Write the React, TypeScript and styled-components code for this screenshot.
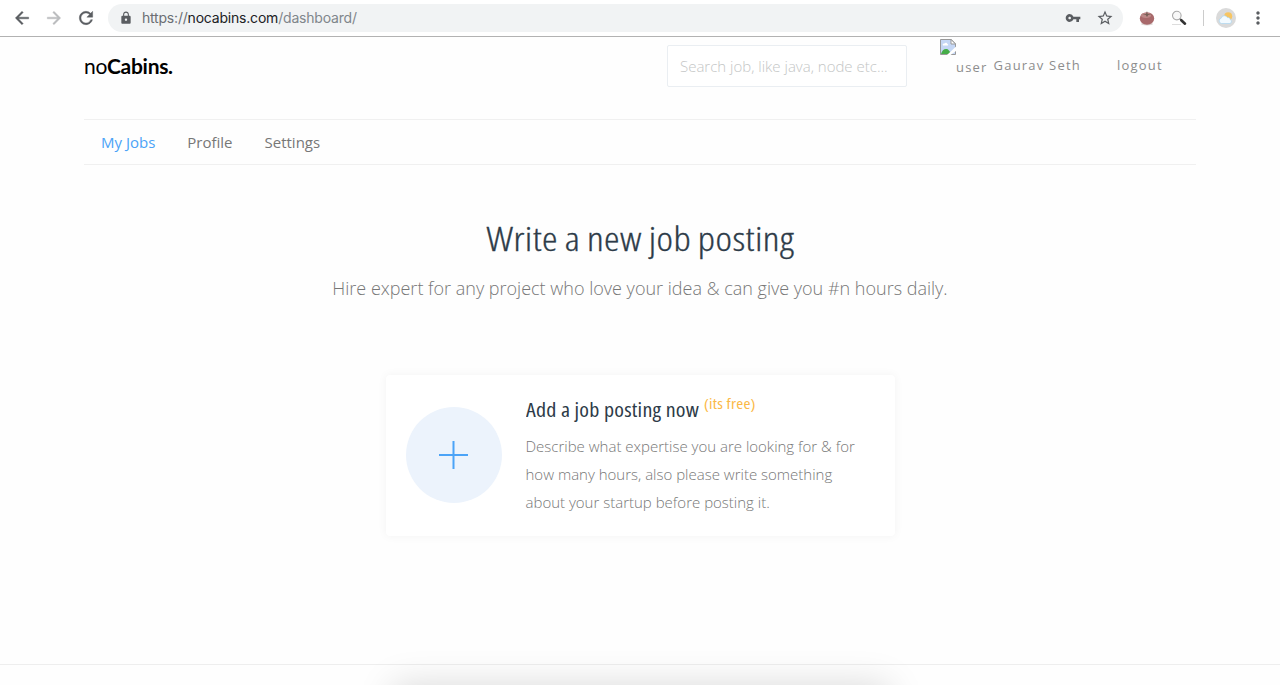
import React, { useState } from "react";
import styled, { createGlobalStyle } from "styled-components";
import {
  MdArrowBack,
  MdArrowForward,
  MdLock,
  MdMoreVert,
  MdRefresh,
  MdStarBorder,
  MdVpnKey,
} from "react-icons/md";

const tabs = ["My Jobs", "Profile", "Settings"];

const BrokenImage = () => (
  <svg width="16" height="16" viewBox="0 0 16 16">
    <path d="M.5.5h10.8l4.2 4.2v10.8H.5z" fill="#c5d7f5" stroke="#999" />
    <path d="M3 6.5c-.8-1.4.5-2.5 1.5-2 .8-1.5 3-.8 2.8.5 1.2 0 1.2 1.5.3 1.5z" fill="#fff" />
    <path d="M1 15c1-4 4-6 7-4.500L12 15z" fill="#46ad48" />
    <path d="M16 7.500L7 16h3.500L16 12z" fill="#fff" />
    <path d="M11 .5v4.500h4.500z" fill="#fff" stroke="#999" />
  </svg>
);

const Tomato = () => (
  <svg width="16" height="16" viewBox="0 0 16 16">
    <ellipse cx="8" cy="14" rx="6" ry="1.500" fill="#ddd6d4" />
    <ellipse cx="8" cy="8.500" rx="7.200" ry="6.200" fill="#a9696b" />
    <ellipse cx="7" cy="5.500" rx="5" ry="2.400" fill="#bd8887" />
    <path d="M3.500 4.500L7 4l1-3 .7 3 4 .6-3.500.4L8 7 6.700 5z" fill="#765f56" />
  </svg>
);

const Magnifier = () => (
  <svg width="16" height="16" viewBox="0 0 16 16">
    <path d="M1 14.500h9" stroke="#ddd" />
    <circle cx="5.800" cy="5.600" r="4.300" fill="#f8f8f8" stroke="#aaa" strokeWidth="1.100" />
    <path d="M8.800 8.800l1.700 1.700" stroke="#777" strokeWidth="1.300" />
    <path d="M10.300 10.200l3.700 3.500" stroke="#333" strokeWidth="2.600" strokeLinecap="round" />
  </svg>
);

const Weather = () => (
  <svg width="20" height="20" viewBox="0 0 20 20">
    <circle cx="10" cy="10" r="10" fill="#dadada" />
    <circle cx="12.200" cy="8.300" r="4" fill="#f7c562" />
    <path
      d="M5.500 15.500a2.700 2.700 0 0 1-.3-5.300 3.300 3.300 0 0 1 6.200-.6 2.400 2.400 0 0 1 3 2.200 2 2 0 0 1-.4 3.700z"
      fill="#f2faff"
      stroke="#a9d5f1"
      strokeWidth=".7"
    />
  </svg>
);

const App = () => {
  const [active, setActive] = useState("My Jobs");
  const [search, setSearch] = useState("");

  const changeSearch = (e: React.ChangeEvent<HTMLInputElement>) => {
    setSearch(e.target.value);
  };

  return (
    <>
      <GlobalStyle />
      <Page>
        <BrowserBar>
          <BrowserButtons>
            <MdArrowBack size={20} />
            <MdArrowForward size={20} color="#babcbe" />
            <MdRefresh size={20} />
          </BrowserButtons>
          <AddressBar>
            <MdLock size={14} />
            <Url>
              https://<b>nocabins.com</b>
              <UrlPath>/dashboard/</UrlPath>
            </Url>
            <MdVpnKey size={16} />
            <MdStarBorder size={18} />
          </AddressBar>
          <Extensions>
            <Tomato />
            <Magnifier />
          </Extensions>
          <BarDivider />
          <Weather />
          <MenuButton>
            <MdMoreVert size={20} />
          </MenuButton>
        </BrowserBar>
        <Container>
          <Header>
            <Logo>
              no<b>Cabins.</b>
            </Logo>
            <SearchInput
              value={search}
              onChange={changeSearch}
              placeholder="Search job, like java, node etc..."
            />
            <UserBox>
              <BrokenImage />
              <UserAlt>user</UserAlt>
              <UserName>Gaurav Seth</UserName>
            </UserBox>
            <Logout>logout</Logout>
          </Header>
          <Nav>
            {tabs.map((tab) => (
              <Tab key={tab} $active={tab === active} onClick={() => setActive(tab)}>
                {tab}
              </Tab>
            ))}
          </Nav>
          <Main>
            <Title>Write a new job posting</Title>
            <SubTitle>
              Hire expert for any project who love your idea &amp; can give you #n hours daily.
            </SubTitle>
            <JobCard>
              <PlusCircle>
                <svg width="30" height="30" viewBox="0 0 30 30">
                  <path d="M0 15h29M14.500 1v28" stroke="#4ba3f7" strokeWidth="2" />
                </svg>
              </PlusCircle>
              <CardBody>
                <CardTitle>
                  <CardHeading>Add a job posting now</CardHeading>
                  <Free>(its free)</Free>
                </CardTitle>
                <CardText>
                  Describe what expertise you are looking for &amp; for
                  <br />
                  how many hours, also please write something
                  <br />
                  about your startup before posting it.
                </CardText>
              </CardBody>
            </JobCard>
          </Main>
        </Container>
        <Footer />
        <BottomPanel />
      </Page>
    </>
  );
};

export default App;

const GlobalStyle = createGlobalStyle`
  * {
    box-sizing: border-box;
  }
  body {
    margin: 0;
    background: #fefefe;
    font-family: "Open Sans", sans-serif;
    -webkit-font-smoothing: antialiased;
  }
  svg {
    display: block;
    flex-shrink: 0;
  }
`;

const Page = styled.div`
  position: relative;
  display: flex;
  flex-direction: column;
  height: 685px;
  overflow: hidden;
`;

const BrowserBar = styled.div`
  display: flex;
  align-items: center;
  height: 37px;
  border-bottom: 1px solid #b2b2b2;
  background: #fff;
  color: #5a5d61;
`;

const BrowserButtons = styled.div`
  display: flex;
  gap: 12px;
  width: 108px;
  padding-left: 12px;

  path:last-child {
    stroke: currentColor;
    stroke-width: 0.5px;
  }
`;

const AddressBar = styled.div`
  display: flex;
  align-items: center;
  width: 1015px;
  height: 28px;
  padding: 0 9px 0 11px;
  border-radius: 14px;
  background: #f1f3f4;
`;

const Url = styled.div`
  flex: 1;
  padding: 0 0 1px 9px;
  font-family: Inter, sans-serif;
  font-size: 14px;
  letter-spacing: -0.2px;
  color: #6a6e73;

  b {
    font-weight: 400;
    color: #202124;
  }

  & + svg {
    margin-right: 15px;
  }
`;

const UrlPath = styled.span`
  color: #80868b;
`;

const Extensions = styled.div`
  display: flex;
  gap: 16px;
  padding-left: 16px;
`;

const BarDivider = styled.div`
  width: 1px;
  height: 16px;
  margin: 0 12px 0 16px;
  background: #ccc;
`;

const MenuButton = styled.div`
  padding-left: 12px;
`;

const Container = styled.div`
  width: 1112px;
  margin: 0 auto;
`;

const Header = styled.div`
  display: flex;
  height: 82px;
`;

const Logo = styled.div`
  width: 583px;
  padding-top: 14px;
  font-family: Lato, sans-serif;
  font-size: 21px;
  letter-spacing: -0.3px;
  line-height: 30px;
  color: #000;

  b {
    font-weight: 700;
  }
`;

const SearchInput = styled.input`
  width: 240px;
  height: 42px;
  margin-top: 8px;
  padding: 0 12px;
  border: 1px solid #eaeef2;
  border-radius: 2px;
  outline: none;
  background: #fff;
  font-family: "Open Sans", sans-serif;
  font-size: 15px;
  font-weight: 300;

  &::placeholder {
    color: #c4c6c6;
  }
`;

const UserBox = styled.div`
  display: flex;
  width: 177px;
  padding: 2px 0 0 33px;
  font-size: 13px;
  letter-spacing: 1.2px;
  line-height: 20px;
  color: #8d8d8d;
`;

const UserAlt = styled.span`
  padding-top: 18px;
`;

const UserName = styled.span`
  padding: 16px 0 0 6px;
  white-space: nowrap;
`;

const Logout = styled.div`
  padding: 18px 0 0 33px;
  font-size: 13px;
  letter-spacing: 1.2px;
  line-height: 20px;
  color: #8d8d8d;
`;

const Nav = styled.div`
  display: flex;
  gap: 32px;
  height: 46px;
  padding-left: 17px;
  border-top: 1px solid #f0f0f0;
  border-bottom: 1px solid #f0f0f0;
`;

const Tab = styled.div<{ $active: boolean }>`
  font-size: 15px;
  line-height: 45px;
  color: ${({ $active }) => ($active ? "#4ba3f7" : "#777")};
  cursor: pointer;
`;

const Main = styled.div`
  display: flex;
  flex-direction: column;
  align-items: center;
  height: 499px;
  padding-top: 49px;
`;

const Title = styled.h1`
  margin: 0;
  font-size: 33px;
  font-weight: 300;
  font-stretch: 75%;
  letter-spacing: 0.4px;
  word-spacing: -1px;
  line-height: 50px;
  color: #2d3b48;
  -webkit-text-stroke: 0.3px #2d3b48;
  transform: scaleX(1.19);
`;

const SubTitle = styled.p`
  margin: 8px 0 0;
  font-size: 18px;
  font-weight: 300;
  line-height: 32px;
  color: #777;
`;

const JobCard = styled.div`
  display: flex;
  width: 509px;
  height: 161px;
  margin-top: 71px;
  padding: 20px;
  border-radius: 4px;
  background: #fff;
  box-shadow: 0 0 10px rgba(0, 0, 0, 0.05);
`;

const PlusCircle = styled.div`
  display: flex;
  align-items: center;
  justify-content: center;
  width: 96px;
  height: 96px;
  margin: 12px 24px 0 0;
  border-radius: 50%;
  background: #ecf3fc;
`;

const CardBody = styled.div`
  flex: 1;
`;

const CardTitle = styled.div`
  display: flex;
  height: 37px;
`;

const CardHeading = styled.h2`
  width: 178px;
  margin: 0;
  font-size: 19px;
  font-weight: 400;
  font-stretch: 75%;
  letter-spacing: 0.2px;
  line-height: 31px;
  color: #2d3b48;
  white-space: nowrap;
  transform: scaleX(1.16);
  transform-origin: left;
`;

const Free = styled.span`
  font-size: 14px;
  font-stretch: 75%;
  letter-spacing: 0.2px;
  line-height: 18px;
  color: #fbb946;
  white-space: nowrap;
  transform: scaleX(1.2);
  transform-origin: left;
`;

const CardText = styled.p`
  margin: 0;
  font-size: 15px;
  font-weight: 300;
  line-height: 28px;
  color: #777;
  white-space: nowrap;
`;

const Footer = styled.div`
  height: 21px;
  border-top: 1px solid #eee;
`;

const BottomPanel = styled.div`
  position: absolute;
  top: 685px;
  left: 393px;
  width: 496px;
  height: 100px;
  box-shadow: 0 0 36px rgba(0, 0, 0, 0.15);
`;
